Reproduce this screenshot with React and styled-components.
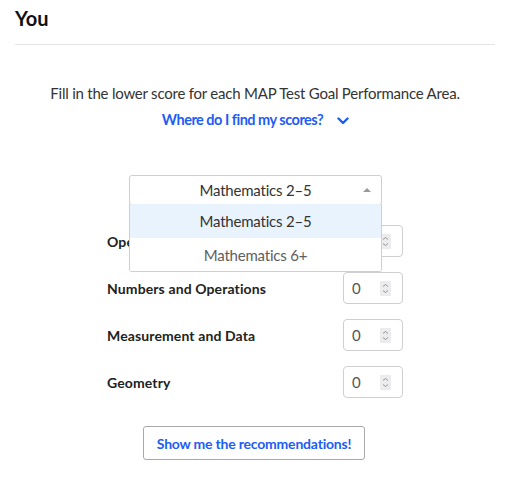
import React from "react";
import styled, { createGlobalStyle } from "styled-components";

const GlobalStyle = createGlobalStyle`
  body {
    margin: 0;
    background: #fff;
    font-family: Lato, "Open Sans", sans-serif;
    color: #222;
  }
`;

const areas = [
  "Operations and Algebraic Thinking",
  "Numbers and Operations",
  "Measurement and Data",
  "Geometry",
];

const Chevron = () => (
  <svg width="12" height="8" viewBox="0 0 12 8">
    <polyline
      points="1.5,1.5 6,6 10.5,1.5"
      fill="none"
      stroke="#1d5cf5"
      strokeWidth="2.4"
      strokeLinecap="round"
      strokeLinejoin="round"
    />
  </svg>
);

const SpinIcon = () => (
  <svg width="11" height="15" viewBox="0 0 11 15">
    <rect width="11" height="15" fill="#ececef" />
    <polyline points="3,5.5 5.5,3.5 8,5.5" fill="none" stroke="#8a8a8a" strokeWidth="0.9" />
    <polyline points="3,9.5 5.5,11.5 8,9.5" fill="none" stroke="#8a8a8a" strokeWidth="0.9" />
  </svg>
);

const App = () => {
  return (
    <Page>
      <GlobalStyle />
      <Title>You</Title>
      <Divider />
      <Intro>
        <Instruction>
          Fill in the lower score for each MAP Test Goal Performance Area.
        </Instruction>
        <HelpLink>
          Where do I find my scores?
          <Chevron />
        </HelpLink>
      </Intro>
      <Form>
        <SelectWrap>
          <SelectBox>
            Mathematics 2–5
            <Caret />
          </SelectBox>
          <Menu>
            <Option $active>Mathematics 2–5</Option>
            <Option>Mathematics 6+</Option>
          </Menu>
        </SelectWrap>
        <Rows>
          {areas.map((area) => (
            <Row key={area}>
              <Label>{area}</Label>
              <NumberField>
                <Value>0</Value>
                <SpinIcon />
              </NumberField>
            </Row>
          ))}
        </Rows>
        <SubmitButton>Show me the recommendations!</SubmitButton>
      </Form>
    </Page>
  );
};

const Page = styled.div`
  width: 480px;
  padding: 0 17px 0 15px;
`;
const Title = styled.h2`
  margin: 0;
  padding: 6px 0 14px;
  font-size: 20px;
  line-height: 24px;
  font-weight: 700;
  color: #111;
`;
const Divider = styled.div`
  height: 1px;
  background: #e4e4e4;
`;
const Intro = styled.div`
  text-align: center;
  padding-top: 39px;
`;
const Instruction = styled.p`
  margin: 0;
  font-size: 15px;
  line-height: 18px;
  letter-spacing: -0.22px;
  color: #333;
`;
const HelpLink = styled.a`
  display: inline-flex;
  align-items: center;
  gap: 14px;
  margin-top: 9px;
  margin-left: 1px;
  font-size: 14.5px;
  line-height: 18px;
  font-weight: 700;
  letter-spacing: -0.5px;
  color: #1d5cf5;
  cursor: pointer;
  svg {
    margin-top: 1px;
  }
`;
const Form = styled.div`
  width: 296px;
  margin: 46px auto 0;
  display: flex;
  flex-direction: column;
  align-items: center;
`;
const SelectWrap = styled.div`
  position: relative;
  width: 253px;
  margin-left: 1px;
`;
const SelectBox = styled.div`
  position: relative;
  box-sizing: border-box;
  height: 30px;
  border: 1px solid #cfcfcf;
  border-radius: 3px;
  display: flex;
  align-items: center;
  justify-content: center;
  font-size: 15px;
  letter-spacing: -0.2px;
  color: #333;
`;
const Caret = styled.span`
  position: absolute;
  right: 10px;
  top: 12px;
  width: 0;
  height: 0;
  border-left: 4px solid transparent;
  border-right: 4px solid transparent;
  border-bottom: 4px solid #9a9a9a;
`;
const Menu = styled.div`
  position: absolute;
  top: 29px;
  left: 0;
  right: 0;
  background: #fff;
  border: 1px solid #cfcfcf;
  border-top: none;
  border-radius: 0 0 3px 3px;
  z-index: 2;
`;
const Option = styled.div`
  height: ${(p) => (p.$active ? 34 : 33)}px;
  display: flex;
  align-items: center;
  justify-content: center;
  font-size: 15px;
  letter-spacing: -0.2px;
  background: ${(p) => (p.$active ? "#e9f3fd" : "#fff")};
  color: ${(p) => (p.$active ? "#333" : "#5e5e5e")};
`;
const Rows = styled.div`
  width: 100%;
  margin-top: 20px;
  display: flex;
  flex-direction: column;
  gap: 15px;
`;
const Row = styled.div`
  display: flex;
  align-items: center;
  justify-content: space-between;
  height: 32px;
`;
const Label = styled.span`
  font-size: 14px;
  font-weight: 700;
  letter-spacing: 0.12px;
  color: #222;
`;
const NumberField = styled.div`
  box-sizing: border-box;
  width: 60px;
  height: 32px;
  border: 1px solid #cfcfcf;
  border-radius: 4px;
  display: flex;
  align-items: center;
  justify-content: space-between;
  padding: 0 11px 0 8px;
`;
const Value = styled.span`
  font-size: 15px;
  color: #555;
`;
const SubmitButton = styled.button`
  margin-top: 28px;
  margin-right: 2px;
  width: 222px;
  height: 34px;
  border: 1px solid #a8a8a8;
  border-radius: 3px;
  background: #fff;
  font-family: Lato, "Open Sans", sans-serif;
  font-size: 14px;
  font-weight: 700;
  letter-spacing: -0.2px;
  color: #1d5cf5;
  cursor: pointer;
`;

export default App;
